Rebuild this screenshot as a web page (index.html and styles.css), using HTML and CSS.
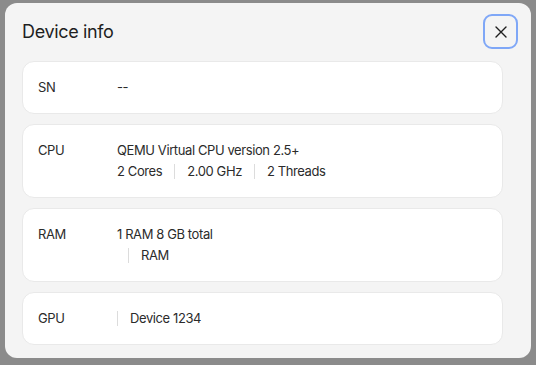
FILE: index.html
```html
<!DOCTYPE html>
<html lang="en">
<head>
    <meta charset="UTF-8">
    <meta name="viewport" content="width=device-width, initial-scale=1.0">
    <title>Device info</title>
    <link rel="stylesheet" href="styles.css">
</head>
<body>
    <div class="overlay">
        <div class="modal">
            <div class="modal-header">
                <h1>Device info</h1>
                <button class="close-btn" type="button" aria-label="Close">
                    <svg width="12" height="12" viewBox="0 0 12 12">
                        <path d="M1 1 L11 11 M11 1 L1 11" stroke="#1f1f1f" stroke-width="1.4" stroke-linecap="round"/>
                    </svg>
                </button>
            </div>
            <div class="info-list">
                <div class="info-card">
                    <div class="info-label">SN</div>
                    <div class="info-value">--</div>
                </div>
                <div class="info-card">
                    <div class="info-label">CPU</div>
                    <div class="info-value">
                        <div>QEMU Virtual CPU version 2.5+</div>
                        <div class="parts">
                            <span>2 Cores</span>
                            <span class="sep"></span>
                            <span>2.00 GHz</span>
                            <span class="sep"></span>
                            <span>2 Threads</span>
                        </div>
                    </div>
                </div>
                <div class="info-card">
                    <div class="info-label">RAM</div>
                    <div class="info-value">
                        <div>1 RAM 8 GB total</div>
                        <div class="parts indent">
                            <span class="sep"></span>
                            <span>RAM</span>
                        </div>
                    </div>
                </div>
                <div class="info-card">
                    <div class="info-label">GPU</div>
                    <div class="info-value">
                        <div class="parts">
                            <span class="sep first"></span>
                            <span>Device 1234</span>
                        </div>
                    </div>
                </div>
            </div>
        </div>
    </div>
</body>
</html>
```

FILE: styles.css
```css
html, body {
    margin: 0;
    padding: 0;
}
body {
    font-family: 'Inter', 'Liberation Sans', sans-serif;
    background-color: #8b8b8b;
    color: #2b2b2b;
    width: 536px;
    height: 365px;
    overflow: hidden;
}
.overlay {
    padding: 3px 5px;
}
.modal {
    width: 526px;
    height: 355px;
    box-sizing: border-box;
    background: #f4f4f4;
    border-radius: 12px;
    padding: 11px 13px 0 17px;
}
.modal-header {
    display: flex;
    align-items: center;
    justify-content: space-between;
    height: 35px;
}
.modal-header h1 {
    margin: 0;
    font-size: 18px;
    font-weight: 400;
    color: #1f1f1f;
    letter-spacing: -0.35px;
}
.close-btn {
    width: 35px;
    height: 35px;
    box-sizing: border-box;
    border: 2px solid #7fa7f7;
    border-radius: 9px;
    background: transparent;
    display: flex;
    align-items: center;
    justify-content: center;
    padding: 0;
    cursor: pointer;
}
.info-list {
    display: flex;
    flex-direction: column;
    gap: 10px;
    margin-top: 12px;
    margin-right: 15px;
}
.info-card {
    display: flex;
    background: #fff;
    border: 1px solid #e9e9e9;
    border-radius: 12px;
    padding: 15px;
    font-size: 13px;
    line-height: 21px;
    letter-spacing: -0.4px;
}
.info-label {
    width: 79px;
    flex-shrink: 0;
}
.parts {
    display: flex;
    align-items: center;
}
.parts.indent {
    padding-left: 11px;
}
.sep {
    width: 1px;
    height: 15px;
    background: #dcdcdc;
    margin: 0 12px;
}
.sep.first {
    margin-left: 0;
}
.indent .sep {
    margin-left: 0;
}
```
